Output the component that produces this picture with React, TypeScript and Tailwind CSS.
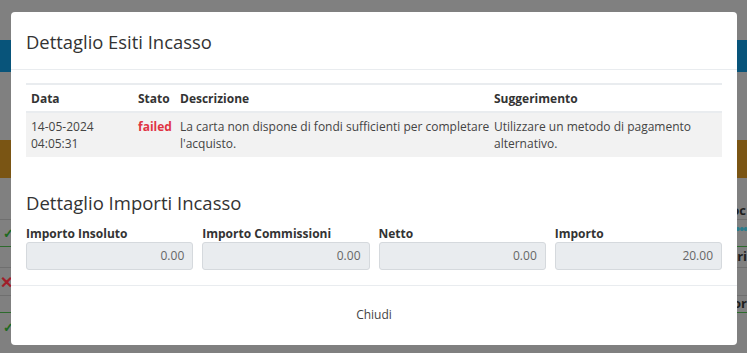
import React from 'react';

const rows = [
  {
    data: ['14-05-2024', '04:05:31'],
    stato: 'failed',
    descrizione: "La carta non dispone di fondi sufficienti per completare l'acquisto.",
    suggerimento: 'Utilizzare un metodo di pagamento alternativo.',
  },
];

const importi = [
  { label: 'Importo Insoluto', value: '0.00' },
  { label: 'Importo Commissioni', value: '0.00' },
  { label: 'Netto', value: '0.00' },
  { label: 'Importo', value: '20.00' },
];

// page behind the modal, only the edges show
const Backdrop: React.FC = () => (
  <div className="flex flex-col h-[353px] bg-[#808080] text-[13px] font-bold text-[#1e1e1e]">
    <div className="h-[40px]" />
    <div className="h-[32px] bg-[#08547a]" />
    <div className="h-[68px]" />
    <div className="h-[38px] bg-[#7a5514]" />
    <div className="h-[24px]" />
    <div className="flex justify-end items-center h-[18px] border-b border-[#6f6f6f]">
      <span className="pr-[1px]">oc</span>
    </div>
    <div className="flex justify-between items-center h-[27px] border-b border-[#2d6b2d]">
      <span className="text-[#1f6a1f] pl-[3px] pt-[2px]">✓</span>
      <span className="text-[#2c7c8c] pb-[6px] tracking-[-1px]">•••</span>
    </div>
    <div className="flex justify-end items-center h-[21px] border-b border-[#6f6f6f]">
      <span>ri</span>
    </div>
    <div className="flex items-center h-[28px] border-b border-[#6f6f6f]">
      <span className="text-[#a01f2a] text-[16px] pl-[0px]">✕</span>
    </div>
    <div className="flex justify-end items-center h-[17px] border-b border-[#2d6b2d]">
      <span>or</span>
    </div>
    <div className="flex items-center h-[30px]">
      <span className="text-[#1f6a1f] pl-[3px]">✓</span>
    </div>
  </div>
);

export default function App() {
  return (
    <div className="relative w-[747px] h-[353px] overflow-hidden" style={{ fontFamily: '"Open Sans", "Noto Sans", sans-serif' }}>
      <Backdrop />
      <div className="absolute left-[11px] top-[12px] w-[726px] h-[333px] bg-white rounded-[4px] flex flex-col text-[#333]">
        <div className="h-[58px] border-b border-[#e9ecef] px-[15px] flex items-center">
          <h4 className="text-[18.4px] leading-[24px] text-[#333] pt-[2px]">Dettaglio Esiti Incasso</h4>
        </div>
        <div className="px-[15px] pt-[13px]">
          <table className="w-full border-collapse text-[12px] leading-[17px]">
            <thead>
              <tr className="border-t-2 border-b-2 border-[#e9ecef]">
                <th className="text-left font-bold w-[111px] px-[5px] h-[28px]">Data</th>
                <th className="text-left font-bold w-[42px] px-[1px]">Stato</th>
                <th className="text-left font-bold w-[314px] px-[1px]">Descrizione</th>
                <th className="text-left font-bold px-[1px]">Suggerimento</th>
              </tr>
            </thead>
            <tbody>
              {rows.map((r, i) => (
                <tr key={i} className="bg-[#f2f2f2] align-top text-[#444]">
                  <td className="px-[5px] py-[5px]">
                    {r.data[0]}
                    <br />
                    {r.data[1]}
                  </td>
                  <td className="px-[1px] py-[5px] font-bold text-[#e03444]">{r.stato}</td>
                  <td className="px-[1px] py-[5px]">{r.descrizione}</td>
                  <td className="px-[1px] py-[5px] pr-[30px]">{r.suggerimento}</td>
                </tr>
              ))}
            </tbody>
          </table>
          <h4 className="text-[18.5px] leading-[24px] mt-[34px] text-[#333]">Dettaglio Importi Incasso</h4>
          <div className="grid grid-cols-4 gap-[9px] mt-[11px]">
            {importi.map((f) => (
              <div key={f.label} className="flex flex-col">
                <label className="text-[12px] font-bold leading-[16px] text-[#333]">{f.label}</label>
                <div className="h-[28px] bg-[#e9ecef] border border-[#d5d9dd] rounded-[3px] flex items-center justify-end pr-[8px] text-[12px] text-[#666]">
                  {f.value}
                </div>
              </div>
            ))}
          </div>
        </div>
        <div className="mt-[15px] border-t border-[#e9ecef] flex-1 flex items-center justify-center">
          <button className="text-[12px] text-[#444] pb-[2px]">Chiudi</button>
        </div>
      </div>
    </div>
  );
}
